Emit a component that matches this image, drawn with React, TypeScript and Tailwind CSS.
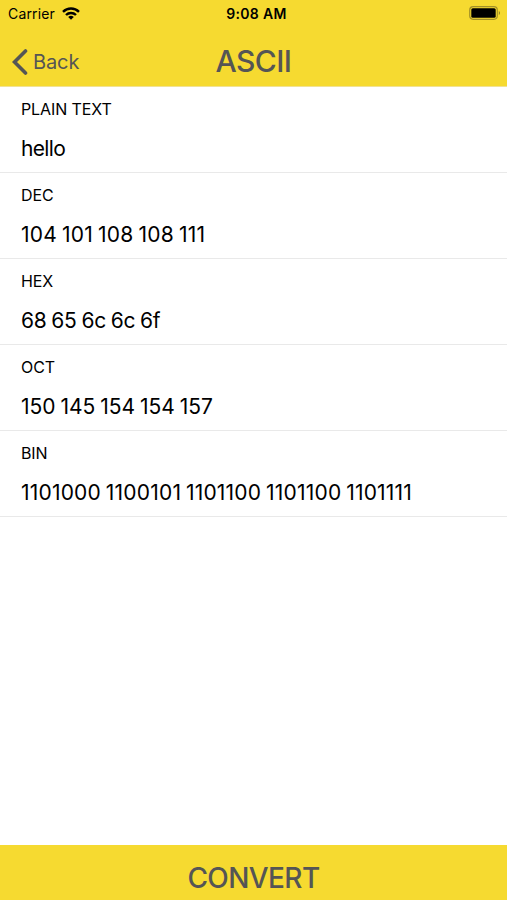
import React from "react";

const rows = [
  { label: "PLAIN TEXT", value: "hello", valueClassName: "tracking-[-0.65px]" },
  {
    label: "DEC",
    value: "104 101 108 108 111",
    valueClassName: "tracking-[0.2px] [word-spacing:-1px]",
  },
  {
    label: "HEX",
    value: "68 65 6c 6c 6f",
    valueClassName: "tracking-[-0.3px] [word-spacing:-0.7px]",
  },
  {
    label: "OCT",
    value: "150 145 154 154 157",
    valueClassName: "tracking-[0px] [word-spacing:-1px]",
  },
  {
    label: "BIN",
    value: "1101000 1100101 1101100 1101100 1101111",
    valueClassName: "tracking-[0.2px] [word-spacing:-1.3px]",
  },
];

const StatusBar = () => {
  return (
    <div className="grid h-7 grid-cols-3 items-center pr-1.5 pl-2 text-sm text-black">
      <div className="flex items-center gap-[7px]">
        <span className="tracking-[0.15px]">Carrier</span>
        <svg
          className="-mt-0.5"
          width="18"
          height="13"
          viewBox="0 0 18 13"
          fill="none"
          stroke="black"
          strokeWidth="2.4"
        >
          <path d="M1 4.8a11.4 11.4 0 0 1 16 0" />
          <path d="M4 8a7.1 7.1 0 0 1 10 0" />
          <path d="M9 12.8 6.2 10a4 4 0 0 1 5.6 0Z" fill="black" stroke="none" />
        </svg>
      </div>
      <span className="pl-1 text-center font-semibold tracking-[0.3px]">9:08 AM</span>
      <svg className="-mt-0.5 justify-self-end" width="32" height="14" viewBox="0 0 32 14">
        <rect x="0.7" y="0.7" width="27.6" height="12.6" rx="3.5" fill="none" stroke="#a39127" strokeWidth="1.2" />
        <rect x="2.3" y="2.3" width="24.4" height="9.4" rx="1.5" fill="black" />
        <path d="M29.8 5v4c1.6-.6 1.6-3.4 0-4Z" fill="#8f8126" />
      </svg>
    </div>
  );
};

const App = () => {
  return (
    <div className="flex h-screen w-full flex-col bg-white font-[Inter,sans-serif]">
      <header className="box-content h-[86px] border-b border-[#f1e294] bg-[#f6da30] bg-clip-padding">
        <StatusBar />
        <div className="grid h-[58px] grid-cols-3 items-center px-3 pt-2.5 text-[#555]">
          <button className="flex items-center gap-[5px] text-xl tracking-[-0.1px]">
            <svg
              width="16"
              height="26"
              viewBox="0 0 16 26"
              fill="none"
              stroke="currentColor"
              strokeWidth="3.6"
              strokeLinecap="round"
            >
              <path d="M13.5 2 2.5 13l11 11" />
            </svg>
            Back
          </button>
          <h1 className="-mt-0.5 text-center text-[30px] font-medium tracking-[-0.6px]">ASCII</h1>
        </div>
      </header>
      <main className="flex-1">
        {rows.map((row) => (
          <div
            key={row.label}
            className="h-[86px] border-b border-[#e9e9e9] pt-2.5 pl-[21px] text-black"
          >
            <p className="text-base leading-6 tracking-[-0.1px]">{row.label}</p>
            <p className={`mt-3.5 text-[21px] leading-7 ${row.valueClassName}`}>{row.value}</p>
          </div>
        ))}
      </main>
      <button className="h-[55px] bg-[#f6da30] pt-2.5 text-[28px] font-medium tracking-[-0.6px] text-[#555]">
        CONVERT
      </button>
    </div>
  );
};

export default App;
